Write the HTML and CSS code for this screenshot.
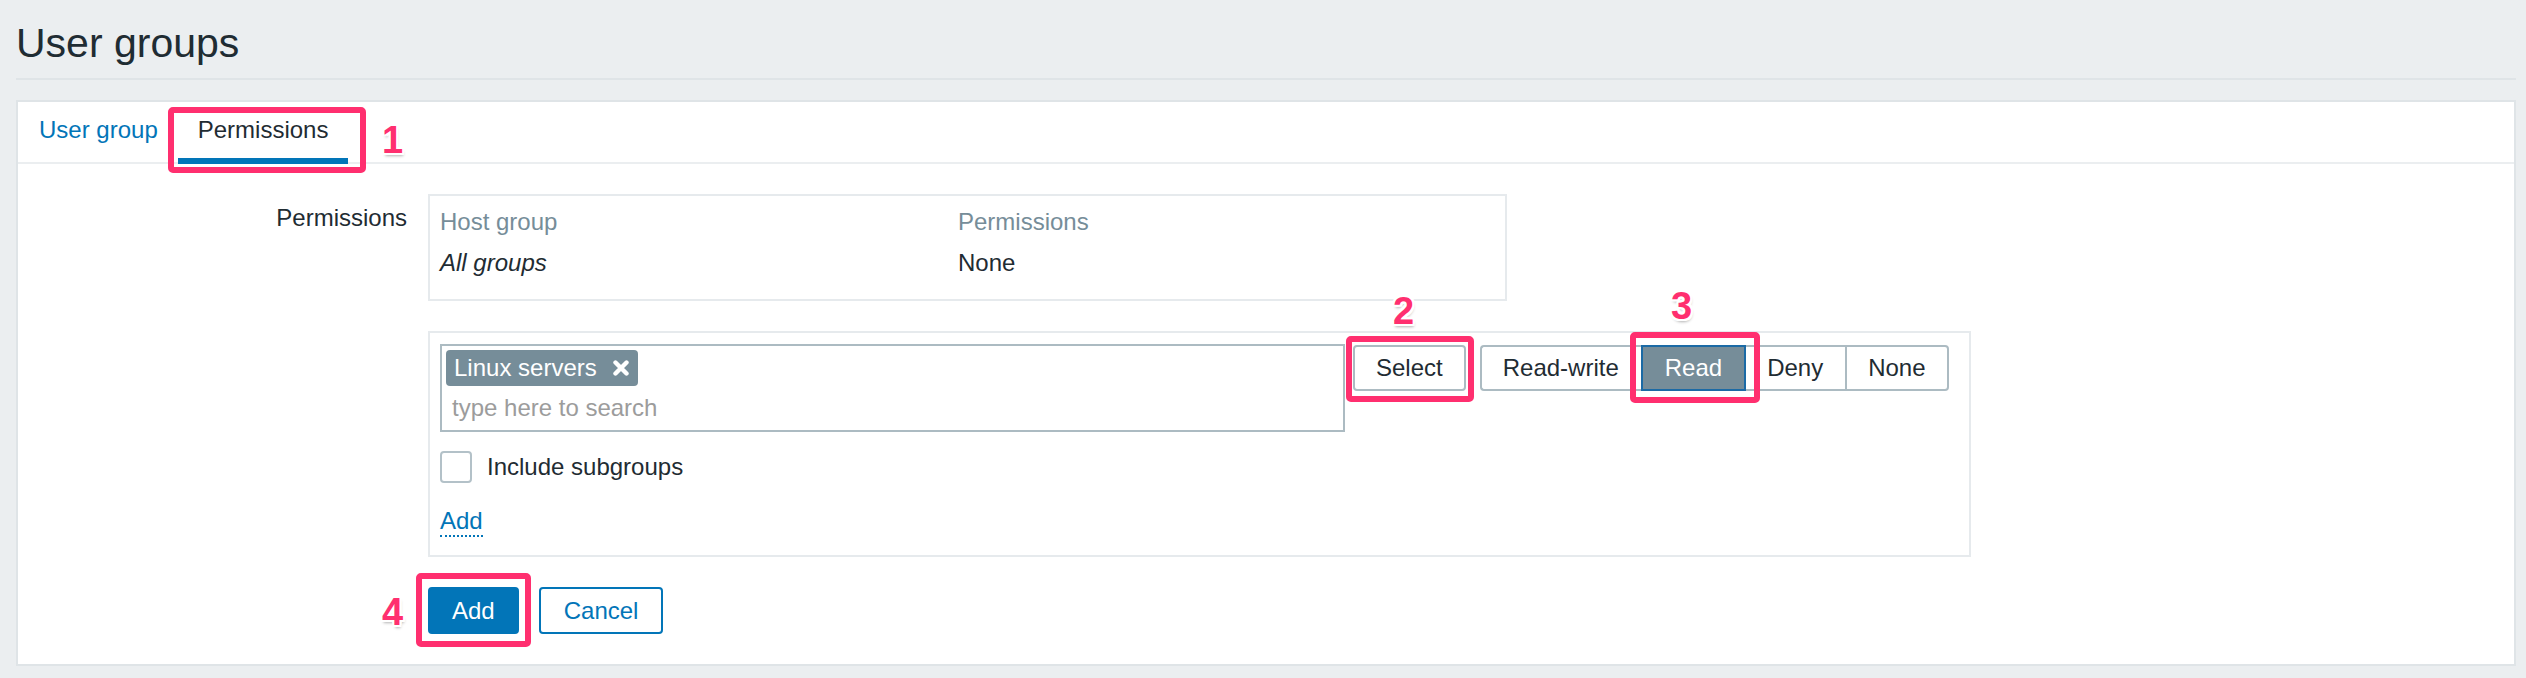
FILE: index.html
```html
<!DOCTYPE html>
<html lang="en">
<head>
<meta charset="utf-8">
<title>User groups</title>
<link rel="stylesheet" href="styles.css">
</head>
<body>
<div class="page">
  <header class="page-header">
    <h1 class="page-title">User groups</h1>
  </header>

  <section class="card">
    <nav class="tabs">
      <a class="tab">User group</a>
      <a class="tab tab-active">Permissions</a>
    </nav>

    <div class="form-grid">
      <div class="form-label">Permissions</div>
      <div class="perm-box">
        <table class="perm-table">
          <colgroup><col class="col-group"><col></colgroup>
          <thead>
            <tr><th>Host group</th><th>Permissions</th></tr>
          </thead>
          <tbody>
            <tr><td><em>All groups</em></td><td>None</td></tr>
          </tbody>
        </table>
      </div>

      <div class="form-label"></div>
      <div class="add-box">
        <div class="add-row">
          <div class="multiselect">
            <div class="ms-tags">
              <span class="tag">Linux servers
                <svg class="tag-x" width="18" height="16" viewBox="0 0 18 16" aria-hidden="true">
                  <path d="M3.5 2.5 L14.5 13.5 M14.5 2.5 L3.5 13.5" stroke="#fff" stroke-width="4.4" stroke-linecap="round" fill="none"/>
                </svg>
              </span>
            </div>
            <div class="ms-input">type here to search</div>
          </div>
          <button class="btn btn-select" type="button">Select</button>
          <div class="segmented">
            <span class="seg seg-rw">Read-write</span>
            <span class="seg seg-read seg-on">Read</span>
            <span class="seg seg-deny">Deny</span>
            <span class="seg seg-none">None</span>
          </div>
        </div>
        <label class="check-row">
          <span class="checkbox"></span>
          <span>Include subgroups</span>
        </label>
        <a class="dotted-link">Add</a>
      </div>

      <div class="form-label"></div>
      <div class="actions">
        <button class="btn-primary" type="button">Add</button>
        <button class="btn-secondary" type="button">Cancel</button>
      </div>
    </div>
  </section>
</div>

<div class="callout callout-1"></div>
<span class="callout-num num-1">1</span>
<div class="callout callout-2"></div>
<span class="callout-num num-2">2</span>
<div class="callout callout-3"></div>
<span class="callout-num num-3">3</span>
<div class="callout callout-4"></div>
<span class="callout-num num-4">4</span>
</body>
</html>
```

FILE: styles.css
```css
* { box-sizing: border-box; }

html, body {
  margin: 0;
  padding: 0;
  background: #ebeef0;
}

body {
  position: relative;
  font-family: "Liberation Sans", Arial, Helvetica, sans-serif;
  font-size: 24px;
  line-height: 28px;
  color: #1f2c33;
  min-height: 678px;
}

.page {
  padding: 0 10px 0 16px;
}

/* Header */
.page-header {
  padding: 19px 0 11px 0;
  border-bottom: 2px solid #dfe4e7;
  margin-bottom: 20px;
}

.page-title {
  margin: 0;
  font-size: 41px;
  line-height: 48px;
  font-weight: normal;
  color: #1f2c33;
}

/* Card */
.card {
  background: #ffffff;
  border: 2px solid #dfe4e7;
}

.tabs {
  display: flex;
  padding-left: 1px;
  border-bottom: 2px solid #ebeef0;
}

.tab {
  display: block;
  padding: 14px 20px 14px;
  margin-bottom: -2px;
  border-bottom: 6px solid transparent;
  color: #0275b8;
  cursor: pointer;
}

.tab-active {
  color: #1f2c33;
  border-bottom-color: #0275b8;
}

/* Form grid */
.form-grid {
  display: grid;
  grid-template-columns: 389px max-content;
  column-gap: 21px;
  row-gap: 30px;
  padding: 30px 0 30px 0;
}

.form-label {
  text-align: right;
  padding-top: 10px;
}

/* Permissions table */
.perm-box {
  width: 1079px;
  border: 2px solid #e6eaed;
}

.perm-table {
  width: 100%;
  border-collapse: collapse;
  table-layout: fixed;
}

.col-group { width: 518px; }

.perm-table th {
  text-align: left;
  font-weight: normal;
  color: #768d99;
  padding: 12px 10px 6px;
}

.perm-table td {
  padding: 7px 10px 22px;
}

/* Add permission box */
.add-box {
  display: flex;
  flex-direction: column;
  align-items: flex-start;
  border: 2px solid #e6eaed;
  padding: 11px 20px 18px 10px;
}

.add-row {
  display: flex;
  align-items: flex-start;
}

.multiselect {
  width: 905px;
  border: 2px solid #acbbc2;
  padding: 4px 4px 8px;
}

.ms-tags {
  display: flex;
}

.tag {
  display: inline-flex;
  align-items: center;
  height: 36px;
  line-height: 36px;
  padding: 0 8px;
  background: #768d99;
  color: #ffffff;
  border-radius: 4px;
}

.tag-x {
  margin-left: 15px;
  display: block;
}

.ms-input {
  margin-top: 8px;
  padding-left: 6px;
  color: #9c9c9c;
}

.btn {
  font: inherit;
  color: #1f2c33;
  background: #ffffff;
  border: 2px solid #acbbc2;
  border-radius: 4px;
  height: 46px;
  padding: 0 21px;
  margin: 1px 0 0 8px;
}

.segmented {
  display: flex;
  margin: 1px 0 0 14px;
  height: 46px;
}

.seg {
  display: flex;
  align-items: center;
  height: 46px;
  padding: 0 21px;
  border: 2px solid #acbbc2;
  border-left-width: 0;
  background: #ffffff;
}

.seg-rw {
  border-left-width: 2px;
  border-radius: 4px 0 0 4px;
  border-right-width: 0;
  padding-right: 22px;
}

.seg-on {
  background: #768d99;
  color: #ffffff;
  border: 2px solid #1b6aa5;
  padding: 0 22px;
}

.seg-deny {
  padding: 0 22px 0 21px;
  border-right-width: 0;
}

.seg-none {
  border-radius: 0 4px 4px 0;
  border-left-width: 2px;
}

.check-row {
  display: flex;
  align-items: center;
  margin-top: 19px;
  height: 32px;
}

.checkbox {
  width: 32px;
  height: 32px;
  border: 2px solid #b3c1c8;
  border-radius: 4px;
  margin-right: 15px;
  background: #ffffff;
}

.dotted-link {
  margin-top: 24px;
  color: #0275b8;
  border-bottom: 2px dotted #0275b8;
  cursor: pointer;
}

/* Footer buttons */
.actions {
  display: flex;
  gap: 20px;
}

.btn-primary,
.btn-secondary {
  font: inherit;
  height: 47px;
  border-radius: 4px;
  border: 2px solid #0275b8;
  cursor: pointer;
}

.btn-primary {
  background: #0275b8;
  color: #ffffff;
  padding: 0 22px;
}

.btn-secondary {
  background: #ffffff;
  color: #0275b8;
  padding: 0 23px;
}

/* Annotation callouts (overlay) */
.callout {
  position: absolute;
  border: 6px solid #ff2f6f;
  border-radius: 5px;
  pointer-events: none;
}

.callout-1 { left: 168px; top: 107px; width: 198px; height: 66px; }
.callout-2 { left: 1346px; top: 336px; width: 128px; height: 66px; }
.callout-3 { left: 1630px; top: 332px; width: 130px; height: 71px; }
.callout-4 { left: 416px; top: 573px; width: 115px; height: 74px; }

.callout-num {
  position: absolute;
  font-family: "Liberation Sans", Arial, sans-serif;
  font-weight: bold;
  font-size: 38px;
  line-height: 38px;
  color: #ff2f6f;
  text-shadow:
    2px 0 0 #fff, -2px 0 0 #fff, 0 2px 0 #fff, 0 -2px 0 #fff,
    2px 2px 0 #fff, -2px -2px 0 #fff, 2px -2px 0 #fff, -2px 2px 0 #fff,
    1px 3px 3px rgba(0, 0, 0, 0.3);
}

.num-1 { left: 382px; top: 121px; }
.num-2 { left: 1393px; top: 292px; }
.num-3 { left: 1671px; top: 287px; }
.num-4 { left: 382px; top: 593px; }
```
